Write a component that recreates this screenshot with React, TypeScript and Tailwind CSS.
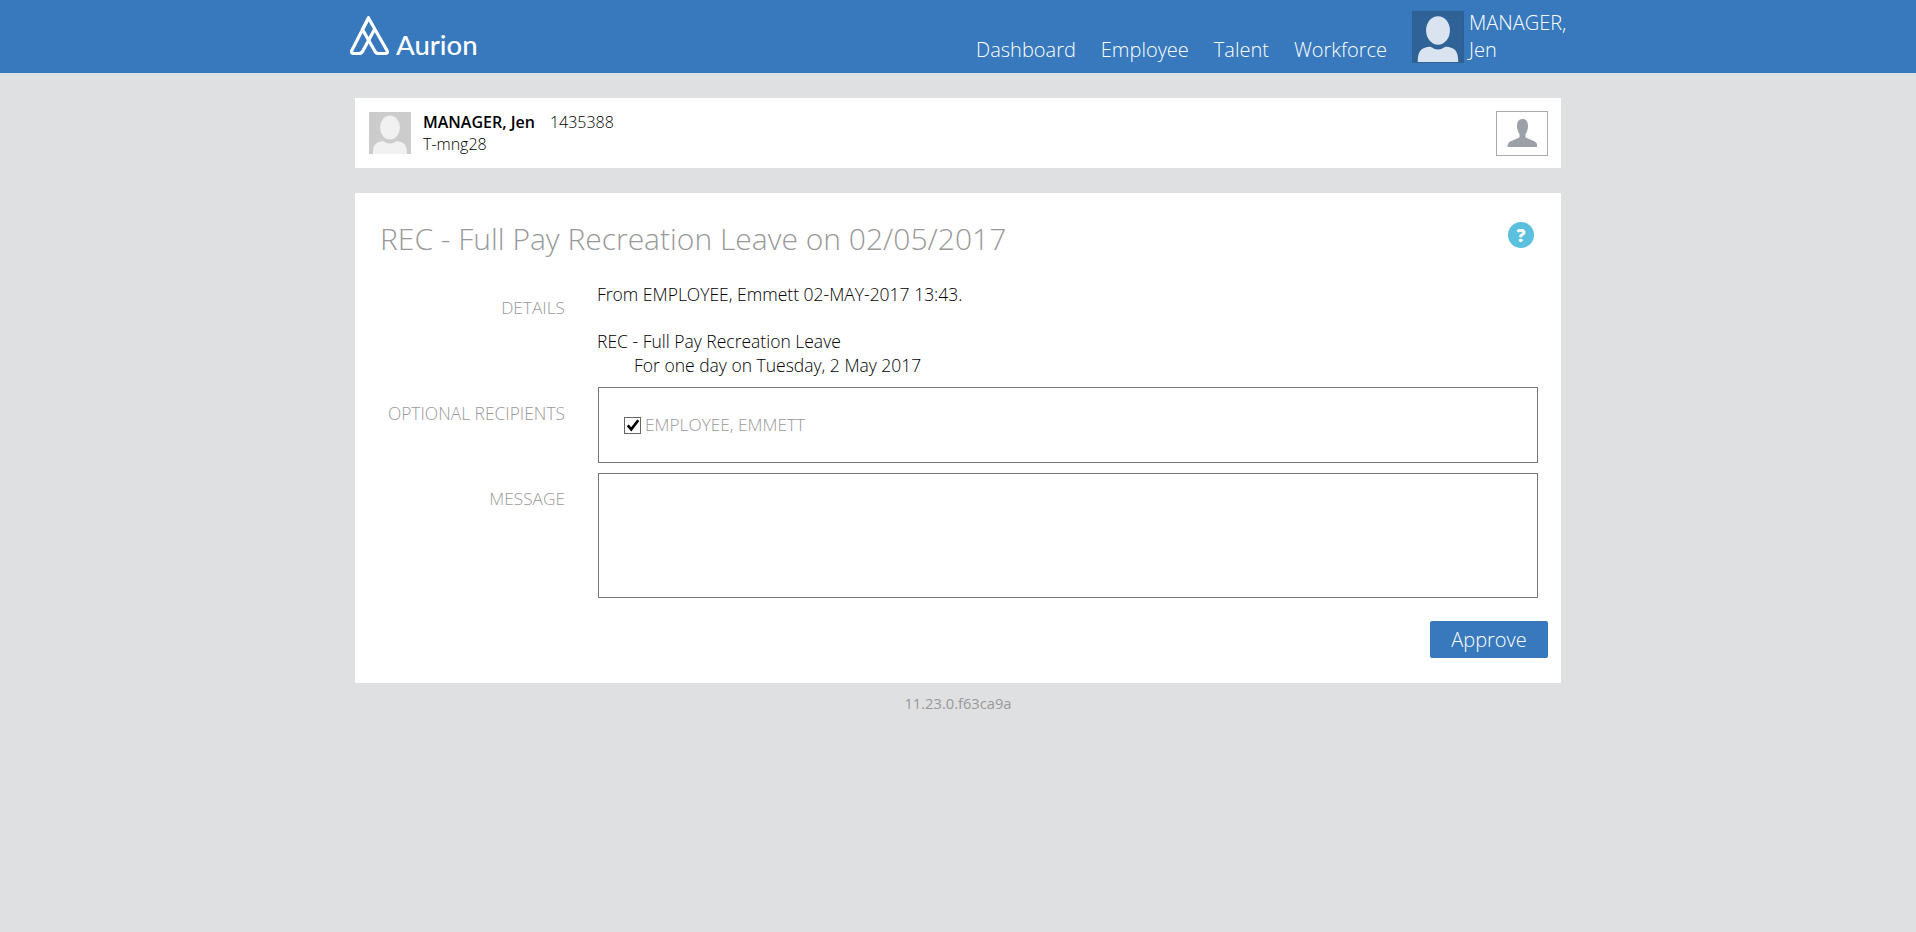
import React from "react";

const Person = ({ className, fill, bg }: { className?: string; fill: string; bg?: string }) => (
  <svg viewBox="0 0 42 42" className={className} style={bg ? { background: bg } : undefined}>
    <ellipse cx="21" cy="15.500" rx="10" ry="12" fill={fill} />
    <path d="M4 42c0-7 1.500-10.500 6-12 2-.7 4-1 5-.5 2 1 3.500 2 6 2s4-1 6-2c1-.5 3-.2 5 .5 4.500 1.500 6 5 6 12z" fill={fill} />
  </svg>
);

export default function App() {
  return (
    <div className="min-h-[932px] bg-[#dfe0e2] font-['Open_Sans',sans-serif] font-light text-black">
      <header className="h-[73px] bg-[#3779bc]">
        <div className="mx-auto flex h-full w-[1216px] justify-between text-white">
          <div className="flex items-start">
            <svg viewBox="0 0 45 45" className="mt-[12px] -ml-[1px] h-[45px] w-[45px]" fill="none" stroke="#fff" strokeWidth="3.2" strokeLinejoin="round" strokeLinecap="round">
              <path d="M19.500 6 L2.800 38.500 Q1.800 41.500 4.800 41.500 L10 41.500 Q12.500 41.500 13.800 39 L25.500 17.500" />
              <path d="M19.500 6 L38 38.500 Q39.300 41.500 36 41.500 L29.500 41.500 Q27 41.500 25.800 39 L13.500 17.500 L19.500 6" />
            </svg>
            <span className="mt-[26px] ml-[2px] font-['Lato',sans-serif] text-[27.5px] leading-[38px] font-medium">Aurion</span>
          </div>
          <nav className="-mr-[1px] flex items-start text-[20px] leading-[27px]">
            <a className="mt-[36px]">Dashboard</a>
            <a className="mt-[36px] ml-[25px]">Employee</a>
            <a className="mt-[36px] ml-[25px]">Talent</a>
            <a className="mt-[36px] ml-[25px]">Workforce</a>
            <Person className="mt-[11px] ml-[25px] h-[52px] w-[52px] border border-[#30608f]" fill="#d9e4f0" bg="#2f6296" />
            <div className="mt-[9px] ml-[5px] w-[98px]">MANAGER, Jen</div>
          </nav>
        </div>
      </header>

      <main className="mx-auto w-[1206px] pt-[25px]">
        <section className="flex h-[70px] items-center justify-between bg-white pr-[13px] pl-[14px]">
          <div className="flex items-center">
            <Person className="h-[42px] w-[42px]" fill="#f1f1f1" bg="#cccccc" />
            <div className="ml-[12px] text-[16px] leading-[22px]">
              <div>
                <span className="font-semibold">MANAGER, Jen</span>
                <span className="ml-[15px]">1435388</span>
              </div>
              <div>T-mng28</div>
            </div>
          </div>
          <button className="flex h-[45px] w-[52px] items-center justify-center border border-[#aaaaaa] bg-white">
            <svg viewBox="0 0 30 30" className="h-[30px] w-[30px]">
              <path d="M15 1c4 0 5.500 3 5.500 7 0 3.500-1 6-2.500 8v3c0 1 2.500 1.500 6 3 3 1.300 6 2 6 7H0c0-5 3-5.700 6-7 3.500-1.500 6-2 6-3v-3c-1.500-2-2.500-4.500-2.500-8 0-4 1.500-7 5.500-7z" fill="#9ba1a7" transform="translate(0.500 0)" />
            </svg>
          </button>
        </section>

        <section className="mt-[25px] h-[490px] bg-white pr-[26px] pl-[25px]">
          <div className="flex items-start justify-between pt-[26px]">
            <h1 className="text-[30px] leading-[40px] text-[#999]">REC - Full Pay Recreation Leave on 02/05/2017</h1>
            <div className="mt-[3px] mr-[1px] flex h-[26px] w-[26px] items-center justify-center rounded-full bg-[#5bc0de] text-[18px] leading-none font-extrabold text-white">?</div>
          </div>
          <div className="mt-[23px] grid grid-cols-[185px_940px] gap-x-[33px]">
            <div className="pt-[14px] text-right text-[17.3px] leading-[24px] text-[#999]">DETAILS</div>
            <div className="-ml-[1px] text-[17.5px] leading-[24px]">
              <p className="mb-[23px]">From EMPLOYEE, Emmett 02-MAY-2017 13:43.</p>
              <p>REC - Full Pay Recreation Leave</p>
              <p className="pl-[37px]">For one day on Tuesday, 2 May 2017</p>
            </div>
            <div className="pt-[24px] text-right text-[17.4px] leading-[24px] text-[#999]">OPTIONAL RECIPIENTS</div>
            <div className="mt-[10px] flex h-[76px] items-center border border-[#777] pl-[25px]">
              <span className="flex h-[17px] w-[17px] items-center justify-center border border-[#666]">
                <svg viewBox="0 0 16 16" className="h-[14px] w-[14px]" fill="none" stroke="#000" strokeWidth="3">
                  <path d="M2 8.500 L6 13 L14 2.500" />
                </svg>
              </span>
              <span className="ml-[4px] text-[17.3px] text-[#999]">EMPLOYEE, EMMETT</span>
            </div>
            <div className="pt-[24px] text-right text-[17.3px] leading-[24px] text-[#999]">MESSAGE</div>
            <div className="mt-[10px] h-[125px] border border-[#777]" />
          </div>
          <div className="mt-[23px] -mr-[13px] flex justify-end">
            <button className="h-[37px] w-[118px] rounded-[2px] bg-[#3779bc] text-[20px] leading-[37px] text-white">Approve</button>
          </div>
        </section>

        <footer className="mt-[10px] text-center text-[14.7px] leading-[20px] font-normal text-[#999]">11.23.0.f63ca9a</footer>
      </main>
    </div>
  );
}
